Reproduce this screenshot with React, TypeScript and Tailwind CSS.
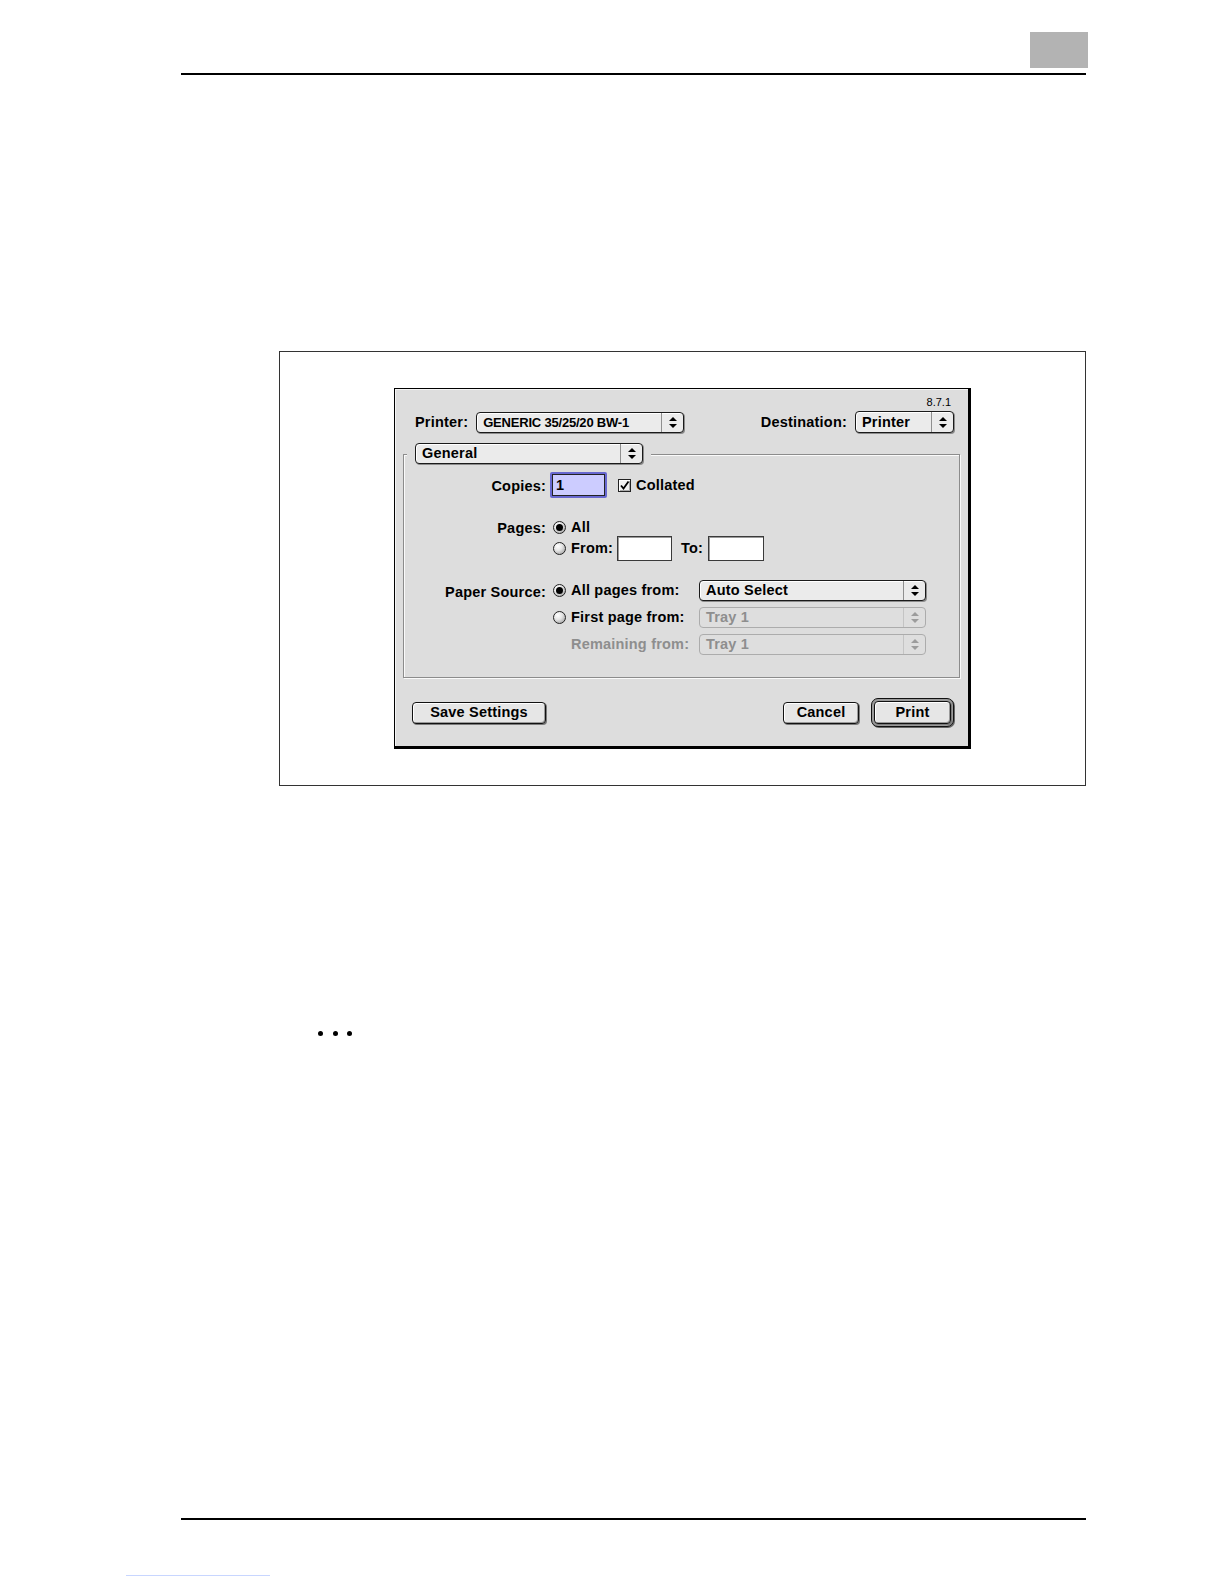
import React from 'react';

const lbl = "font-['Liberation_Sans',Arial,sans-serif] font-bold text-[14.5px] tracking-[0.2px] leading-none text-black whitespace-nowrap";
const lblDis = "font-['Liberation_Sans',Arial,sans-serif] font-bold text-[14.5px] tracking-[0.2px] leading-none text-[#8e8e8e] whitespace-nowrap";

function Arrows({ disabled }: { disabled?: boolean }) {
  const c = disabled ? '#9c9c9c' : '#000';
  return (
    <svg width="8" height="11" viewBox="0 0 8 11">
      <polygon points="4,0 8,4 0,4" fill={c} />
      <polygon points="0,7 8,7 4,11" fill={c} />
    </svg>
  );
}

function Popup({ className, label, disabled, textClass }: { className: string; label: string; disabled?: boolean; textClass: string }) {
  return (
    <div
      className={`flex items-stretch rounded-[4px] border ${
        disabled
          ? 'border-[#acacac] bg-[#dedede]'
          : 'border-[#1a1a1a] bg-[#ebebeb] shadow-[inset_1px_1px_0_#fff,1px_1px_0_#8c8c8c]'
      } ${className}`}
    >
      <div className="flex flex-1 items-center overflow-hidden pl-[6px]">
        <span className={textClass}>{label}</span>
      </div>
      <div className={`flex w-[22px] items-center justify-center border-l ${disabled ? 'border-[#c4c4c4]' : 'border-[#8f8f8f]'}`}>
        <Arrows disabled={disabled} />
      </div>
    </div>
  );
}

function Radio({ on }: { on?: boolean }) {
  return (
    <div className="flex h-[13px] w-[13px] shrink-0 items-center justify-center rounded-full border border-[#222] bg-[radial-gradient(circle_at_35%_30%,#ffffff_0%,#e6e6e6_40%,#8f8f8f_100%)]">
      {on && <div className="h-[7px] w-[7px] rounded-full bg-black" />}
    </div>
  );
}

function Checkbox() {
  return (
    <div className="flex h-[13px] w-[13px] shrink-0 items-center justify-center border border-[#222] bg-[#f2f2f2] shadow-[inset_1px_1px_0_#fff,inset_-1px_-1px_0_#aaa]">
      <svg width="11" height="11" viewBox="0 0 11 11">
        <path d="M2 5.5 L4.5 8.5 L9.5 1.5" fill="none" stroke="#000" strokeWidth="1.8" />
      </svg>
    </div>
  );
}

function Field({ className }: { className: string }) {
  return <div className={`border border-[#3a3a3a] bg-white shadow-[inset_1px_1px_0_#9a9a9a] ${className}`} />;
}

function Btn({ className, children }: { className: string; children: React.ReactNode }) {
  return (
    <div
      className={`flex items-center justify-center rounded-[4px] border border-[#111] bg-[#e6e6e6] shadow-[inset_1px_1px_0_#fff,inset_-1px_-1px_0_#9a9a9a,1px_1px_0_#7a7a7a] ${className}`}
    >
      <span className={lbl}>{children}</span>
    </div>
  );
}

function Dialog() {
  const small = "font-['Liberation_Sans',Arial,sans-serif] font-bold text-[13px] tracking-[-0.2px] leading-none text-black whitespace-nowrap";
  return (
    <div className="flex h-[361px] w-[577px] flex-col border-t border-l border-r-[3px] border-b-[3px] border-black bg-[#dddddd] pl-[20px] pr-[14px] pt-[7px] shadow-[inset_1px_1px_0_#f4f4f4]">
      <div className="flex h-[13px] items-center justify-end pr-[3px]">
        <span className="font-['Liberation_Sans',Arial,sans-serif] text-[11px] leading-none text-black">8.7.1</span>
      </div>
      <div className="mt-[2px] flex h-[22px] items-center justify-between">
        <div className="flex items-center">
          <span className={lbl}>Printer:</span>
          <Popup className="ml-[8px] h-[21px] w-[208px]" label="GENERIC 35/25/20 BW-1" textClass={small} />
        </div>
        <div className="flex items-center">
          <span className={lbl}>Destination:</span>
          <Popup className="ml-[8px] h-[22px] w-[99px]" label="Printer" textClass={lbl} />
        </div>
      </div>

      <div className="ml-[-12px] mr-[-6px] mt-[10px]">
        <div className="relative z-10 flex pl-[4px]">
          <div className="bg-[#dddddd] px-[8px]">
            <Popup className="h-[21px] w-[228px]" label="General" textClass={lbl} />
          </div>
        </div>
        <div className="-mt-[10px] h-[224px] border border-[#8c8c8c] pt-[17px] shadow-[inset_1px_1px_0_#fafafa,1px_1px_0_#fafafa]">
          {/* Copies */}
          <div className="flex h-[26px] items-center">
            <div className="w-[142px] text-right">
              <span className={lbl}>Copies:</span>
            </div>
            <div className="ml-[4px] flex h-[26px] w-[57px] rounded-[2px] bg-[#6868d0] p-[2px]">
              <div className="flex flex-1 items-center border border-[#222] bg-[#ccccff] pl-[3px]">
                <span className={lbl}>1</span>
              </div>
            </div>
            <div className="ml-[11px] flex items-center">
              <Checkbox />
              <span className={`${lbl} ml-[5px]`}>Collated</span>
            </div>
          </div>
          {/* Pages */}
          <div className="mt-[20px] flex h-[18px] items-center">
            <div className="w-[142px] text-right">
              <span className={lbl}>Pages:</span>
            </div>
            <div className="ml-[7px] flex items-center">
              <Radio on />
              <span className={`${lbl} ml-[5px]`}>All</span>
            </div>
          </div>
          <div className="flex h-[25px] items-center">
            <div className="w-[142px]" />
            <div className="ml-[7px] flex items-center">
              <Radio />
              <span className={`${lbl} ml-[5px] w-[41px]`}>From:</span>
              <Field className="ml-[5px] h-[25px] w-[55px]" />
              <span className={`${lbl} ml-[9px]`}>To:</span>
              <Field className="ml-[5px] h-[25px] w-[56px]" />
            </div>
          </div>
          {/* Paper source */}
          <div className="mt-[19px] flex h-[21px] items-center">
            <div className="w-[142px] text-right">
              <span className={lbl}>Paper Source:</span>
            </div>
            <div className="ml-[7px] flex items-center">
              <Radio on />
              <span className={`${lbl} ml-[5px] w-[128px]`}>All pages from:</span>
              <Popup className="h-[21px] w-[227px]" label="Auto Select" textClass={lbl} />
            </div>
          </div>
          <div className="mt-[6px] flex h-[21px] items-center">
            <div className="w-[142px]" />
            <div className="ml-[7px] flex items-center">
              <Radio />
              <span className={`${lbl} ml-[5px] w-[128px]`}>First page from:</span>
              <Popup className="h-[21px] w-[227px]" label="Tray 1" textClass={lblDis} disabled />
            </div>
          </div>
          <div className="mt-[6px] flex h-[21px] items-center">
            <div className="w-[142px]" />
            <div className="ml-[25px] flex items-center">
              <span className={`${lblDis} w-[128px]`}>Remaining from:</span>
              <Popup className="h-[21px] w-[227px]" label="Tray 1" textClass={lblDis} disabled />
            </div>
          </div>
        </div>
      </div>

      {/* Buttons */}
      <div className="mt-[20px] flex h-[29px] items-center">
        <Btn className="ml-[-3px] h-[22px] w-[134px]">Save Settings</Btn>
        <div className="flex-1" />
        <Btn className="h-[22px] w-[76px]">Cancel</Btn>
        <div className="ml-[12px] flex h-[29px] w-[83px] rounded-[7px] border border-[#111] bg-[#9a9a9a] p-[2px] shadow-[1px_1px_0_#666]">
          <Btn className="h-full w-full">Print</Btn>
        </div>
      </div>
    </div>
  );
}

export default function App() {
  return (
    <div className="relative h-[1584px] w-[1224px] overflow-hidden bg-white">
      {/* header */}
      <div className="ml-[181px] w-[905px] pt-[32px]">
        <div className="flex justify-end">
          <div className="mr-[-2px] h-[36px] w-[58px] bg-[#b3b3b3]" />
        </div>
        <div className="mt-[5px] h-[2px] bg-black" />
      </div>

      {/* figure */}
      <div className="ml-[279px] mt-[276px] h-[435px] w-[807px] border border-[#333] pl-[114px] pt-[36px]">
        <Dialog />
      </div>

      {/* dots */}
      <div className="ml-[318px] mt-[245px] flex gap-[9.7px]">
        <div className="h-[5px] w-[5px] rounded-full bg-black" />
        <div className="h-[5px] w-[5px] rounded-full bg-black" />
        <div className="h-[5px] w-[5px] rounded-full bg-black" />
      </div>

      {/* footer line */}
      <div className="ml-[181px] mt-[482px] h-[2px] w-[905px] bg-black" />
      <div className="ml-[126px] mt-[55px] h-px w-[144px] bg-[#c8d6ff]" />
    </div>
  );
}
